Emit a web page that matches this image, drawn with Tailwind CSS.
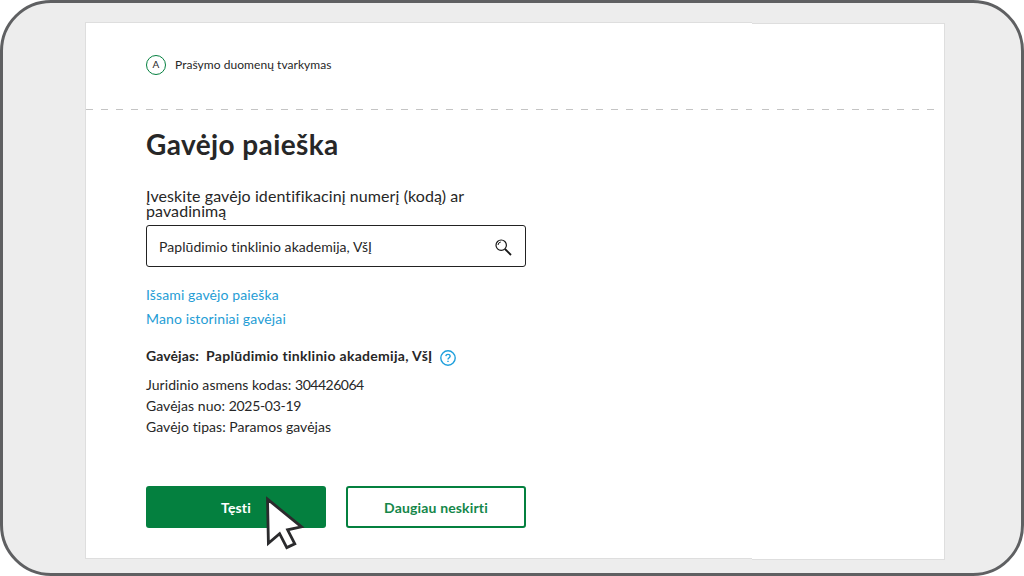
<!DOCTYPE html>
<html lang="lt">
<head>
    <meta charset="UTF-8">
    <meta name="viewport" content="width=device-width, initial-scale=1.0">
    <title>Gavėjo paieška</title>
    <script src="https://cdn.jsdelivr.net/npm/@tailwindcss/browser@4"></script>
</head>
<body class="bg-white font-[Lato,'Noto_Sans',sans-serif] text-[#272727] overflow-hidden">
    <div class="relative w-[1024px] h-[576px] rounded-[51px] border-3 border-[#5f6062] bg-[#ededed] pl-[82px] pt-[19px] flex items-start">
        <!-- Pagrindinis skydelis -->
        <main class="w-[667px] h-[537px] shrink-0 bg-white border-l border-y border-[#dedede]">
            <header class="h-[87px] pl-[60px] pt-[32px] flex items-start text-xs">
                <span class="size-5 rounded-full border border-[#04803f] flex items-center justify-center text-[10px]">A</span>
                <span class="ml-[9px] leading-5 whitespace-nowrap tracking-[0.05px]">Prašymo duomenų tvarkymas</span>
            </header>
            <div class="h-px -mt-px bg-[repeating-linear-gradient(90deg,#c4c4c4_0_7px,transparent_7px_15px)]"></div>

            <section class="ml-[60px] w-[380px] pt-[14px]">
                <h1 class="h-[40px] leading-[40px] text-[28px] font-bold whitespace-nowrap tracking-[0.4px]">Gavėjo paieška</h1>
                <label for="paieska" class="block mt-[24px] h-[37px] text-[16px] leading-[15px] whitespace-nowrap tracking-[0.09px]">Įveskite gavėjo identifikacinį numerį (kodą) ar<br>pavadinimą</label>
                <div class="h-[42px] border border-[#222] rounded-[3px] pl-3 pr-[13px] flex items-center justify-between">
                    <input id="paieska" type="text" value="Paplūdimio tinklinio akademija, VšĮ" class="w-[300px] mt-[2px] text-sm outline-none tracking-[0.06px]">
                    <svg class="size-[17px] mt-[2px]" viewBox="0 0 17 17" fill="none" stroke="#161616">
                        <circle cx="6.2" cy="6.2" r="5.2" stroke-width="1.2"/>
                        <path d="M3 6Q3.2 3.4 5.8 3" stroke-width="1"/>
                        <path d="M10 10l6 6" stroke-width="1.8"/>
                    </svg>
                </div>

                <nav class="mt-4 flex flex-col text-sm leading-6 text-[#259dd5] whitespace-nowrap tracking-[0.12px]">
                    <a href="#">Išsami gavėjo paieška</a>
                    <a href="#">Mano istoriniai gavėjai</a>
                </nav>

                <div class="mt-[15px] h-6 flex items-start text-sm leading-[20px] font-bold whitespace-nowrap">
                    <span class="w-[60px] tracking-[0.1px]">Gavėjas:</span>
                    <span class="w-[234px] tracking-[0.3px]">Paplūdimio tinklinio akademija, VšĮ</span>
                    <svg class="size-4 mt-[4px]" viewBox="0 0 16 16" fill="none" stroke="#1fa0dd" stroke-width="1.4">
                        <circle cx="8" cy="8" r="7.2"/>
                        <path d="M5.8 6.2Q6 4.4 8 4.4T10.2 6.1Q10.2 7.1 9 7.8Q8 8.3 8 9.4M8 10.7V12.1"/>
                    </svg>
                </div>
                <div class="mt-[4px] text-sm leading-[21px] whitespace-nowrap tracking-[0.05px]">
                    <p>Juridinio asmens kodas: <span class="tracking-[-0.5px]">304426064</span></p>
                    <p>Gavėjas nuo: <span class="tracking-[-0.3px]">2025-03-19</span></p>
                    <p>Gavėjo tipas: Paramos gavėjas</p>
                </div>

                <div class="mt-[49px] grid grid-cols-2 gap-5 text-sm font-bold tracking-[0.15px]">
                    <button class="h-[42px] rounded-[3px] bg-[#04803f] text-white pt-[2px]">Tęsti</button>
                    <button class="h-[42px] rounded-[3px] border-2 border-[#04803f] text-[#14874a] pt-[2px]">Daugiau neskirti</button>
                </div>
            </section>
        </main>

        <!-- Dešinė skydelio dalis -->
        <aside class="w-[193px] h-[537px] mt-px shrink-0 bg-white border-r border-y border-[#dedede] pl-[10px] pr-[9px] pt-[85px]">
            <div class="h-px bg-[repeating-linear-gradient(90deg,#c4c4c4_0_7px,transparent_7px_15px)]"></div>
        </aside>

        <!-- Žymeklis -->
        <svg class="absolute left-[260px] top-[490px] w-[46px] h-[62px]" viewBox="263 493 46 62" fill="white" stroke="#2b2b2d" stroke-width="2.8">
            <path d="M267.5 499.2L301.5 526.8L287.6 529.8L294.8 543.8L286.8 547.6L279.6 533.6L268.4 543.2Z"/>
        </svg>
    </div>
</body>
</html>
